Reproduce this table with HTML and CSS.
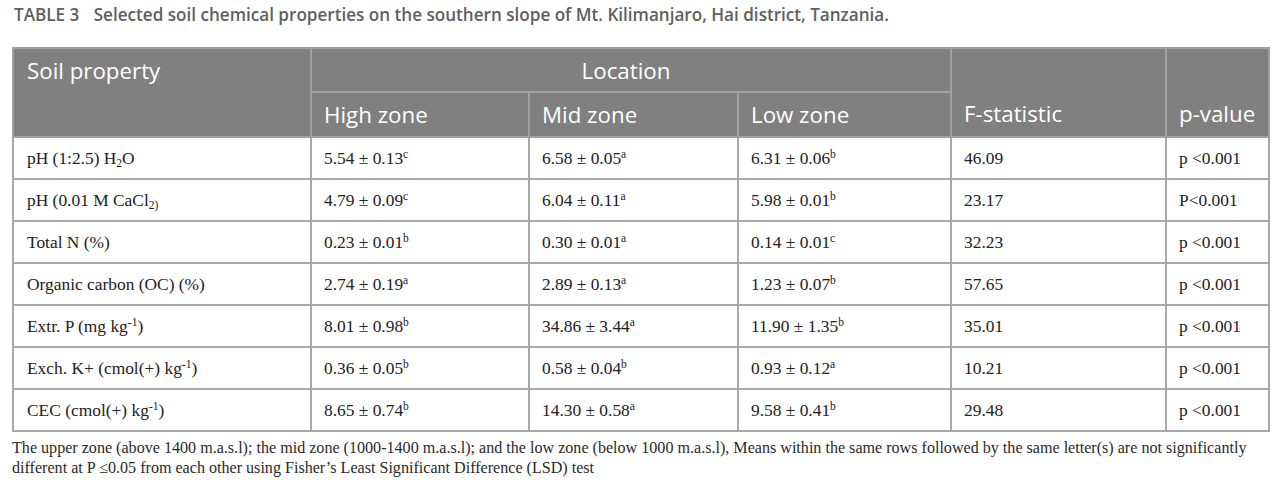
FILE: index.html
```html
<!DOCTYPE html>
<html>
<head>
<meta charset="utf-8">
<link rel="stylesheet" href="styles.css">
</head>
<body>
<div class="page">
  <div class="caption"><span class="label">TABLE 3</span> Selected soil chemical properties on the southern slope of Mt. Kilimanjaro, Hai district, Tanzania.</div>
  <table class="data">
    <colgroup>
      <col class="c1"><col class="c2"><col class="c3"><col class="c4"><col class="c5"><col class="c6">
    </colgroup>
    <thead>
      <tr class="h1">
        <th rowspan="2" class="top">Soil property</th>
        <th colspan="3" class="center">Location</th>
        <th rowspan="2" class="bottom">F-statistic</th>
        <th rowspan="2" class="bottom">p-value</th>
      </tr>
      <tr class="h2">
        <th>High zone</th>
        <th>Mid zone</th>
        <th>Low zone</th>
      </tr>
    </thead>
    <tbody>
      <tr><td>pH (1:2.5) H<sub>2</sub>O</td><td>5.54 ± 0.13<sup>c</sup></td><td>6.58 ± 0.05<sup>a</sup></td><td>6.31 ± 0.06<sup>b</sup></td><td>46.09</td><td>p &lt;0.001</td></tr>
      <tr><td>pH (0.01 M CaCl<sub>2)</sub></td><td>4.79 ± 0.09<sup>c</sup></td><td>6.04 ± 0.11<sup>a</sup></td><td>5.98 ± 0.01<sup>b</sup></td><td>23.17</td><td>P&lt;0.001</td></tr>
      <tr><td>Total N (%)</td><td>0.23 ± 0.01<sup>b</sup></td><td>0.30 ± 0.01<sup>a</sup></td><td>0.14 ± 0.01<sup>c</sup></td><td>32.23</td><td>p &lt;0.001</td></tr>
      <tr><td>Organic carbon (OC) (%)</td><td>2.74 ± 0.19<sup>a</sup></td><td>2.89 ± 0.13<sup>a</sup></td><td>1.23 ± 0.07<sup>b</sup></td><td>57.65</td><td>p &lt;0.001</td></tr>
      <tr><td>Extr. P (mg kg<sup>-1</sup>)</td><td>8.01 ± 0.98<sup>b</sup></td><td>34.86 ± 3.44<sup>a</sup></td><td>11.90 ± 1.35<sup>b</sup></td><td>35.01</td><td>p &lt;0.001</td></tr>
      <tr><td>Exch. K+ (cmol(+) kg<sup>-1</sup>)</td><td>0.36 ± 0.05<sup>b</sup></td><td>0.58 ± 0.04<sup>b</sup></td><td>0.93 ± 0.12<sup>a</sup></td><td>10.21</td><td>p &lt;0.001</td></tr>
      <tr><td>CEC (cmol(+) kg<sup>-1</sup>)</td><td>8.65 ± 0.74<sup>b</sup></td><td>14.30 ± 0.58<sup>a</sup></td><td>9.58 ± 0.41<sup>b</sup></td><td>29.48</td><td>p &lt;0.001</td></tr>
    </tbody>
  </table>
  <p class="note">The upper zone (above 1400 m.a.s.l); the mid zone (1000-1400 m.a.s.l); and the low zone (below 1000 m.a.s.l), Means within the same rows followed by the same letter(s) are not significantly different at P ≤0.05 from each other using Fisher’s Least Significant Difference (LSD) test</p>
</div>
</body>
</html>
```
FILE: styles.css
```css
html, body {
  margin: 0;
  padding: 0;
  background: #ffffff;
}
.page {
  padding: 5px 12px 0 12px;
}
.caption {
  font-family: "Open Sans", "Liberation Sans", sans-serif;
  font-size: 17.1px;
  font-weight: 600;
  color: #606060;
  line-height: 20px;
  margin: 0 0 22px 2px;
}
.caption .label {
  margin-right: 10px;
}
.data {
  width: 1256px;
  border-collapse: collapse;
  table-layout: fixed;
}
.c1 { width: 298px; }
.c2 { width: 218px; }
.c3 { width: 209px; }
.c4 { width: 213px; }
.c5 { width: 215px; }
.c6 { width: 103px; }
.data th, .data td {
  border: 2px solid #a8a8a8;
  text-align: left;
  padding: 0 0 0 12px;
}
.data thead th {
  background: #808080;
  color: #ffffff;
  font-family: "Open Sans", "Liberation Sans", sans-serif;
  font-weight: 400;
  font-size: 22.3px;
  border-color: #a0a0a0;
}
.data thead tr.h1 th {
  height: 42px;
}
.data thead tr.h2 th {
  height: 43px;
}
.data thead th.top {
  vertical-align: top;
  padding-top: 6px;
  padding-left: 13px;
}
.data thead th.center {
  text-align: center;
  vertical-align: middle;
  padding: 0 10px 0 0;
}
.data thead th.bottom {
  vertical-align: bottom;
  padding-bottom: 7px;
}
.data thead tr.h2 th {
  vertical-align: middle;
}
.data td {
  font-family: "Liberation Serif", "Times New Roman", serif;
  font-size: 17.4px;
  color: #222222;
  height: 40px;
  vertical-align: middle;
}
.data td:first-child {
  padding-left: 13px;
}
.data sup {
  font-size: 11.5px;
  vertical-align: 6px;
  line-height: 0;
}
.data sub {
  font-size: 11.5px;
  vertical-align: -3px;
  line-height: 0;
}
.note {
  font-family: "Liberation Serif", "Times New Roman", serif;
  font-size: 16.1px;
  color: #2a2a2a;
  line-height: 20px;
  margin: 6px 0 0 0;
}
```
